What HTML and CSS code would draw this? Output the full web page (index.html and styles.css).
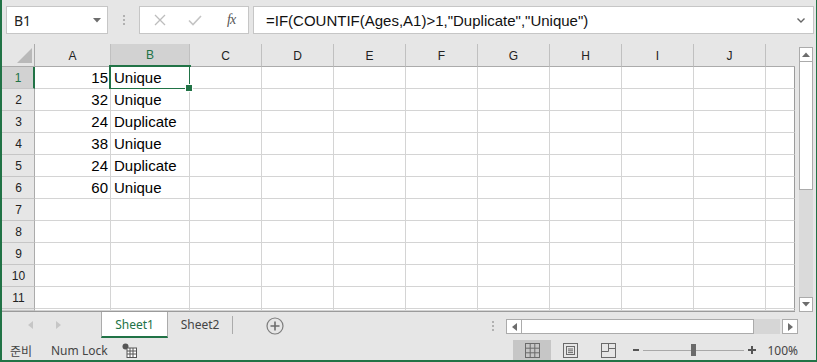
FILE: index.html
```html
<!DOCTYPE html>
<html lang="ko">
<head>
    <meta charset="UTF-8">
    <title>Book1 - Excel</title>
    <link rel="stylesheet" href="styles.css">
</head>
<body>
    <div class="app">
        <!-- Barra de fórmulas -->
        <div class="topbar">
            <div class="namebox">
                <span>B1</span>
                <svg class="caret" width="8" height="5" viewBox="0 0 8 5"><polygon points="0,0 8,0 4,4.5" fill="#6d6d6d"/></svg>
            </div>
            <div class="grip"><i></i><i></i><i></i></div>
            <div class="fx-buttons">
                <svg width="12" height="12" viewBox="0 0 12 12"><path d="M1 1 L11 11 M11 1 L1 11" stroke="#bdbdbd" stroke-width="1.3"/></svg>
                <svg width="14" height="12" viewBox="0 0 14 12"><path d="M1 6.5 L5 10.5 L13 2" stroke="#c4c4c4" stroke-width="1.6" fill="none"/></svg>
                <span class="fx">fx</span>
            </div>
            <div class="formula">
                <span>=IF(COUNTIF(Ages,A1)&gt;1,"Duplicate","Unique")</span>
                <svg class="chev" width="8" height="5" viewBox="0 0 8 5"><path d="M0.5 0.5 L4 4 L7.5 0.5" stroke="#666" stroke-width="1.4" fill="none"/></svg>
            </div>
        </div>

        <!-- Hoja -->
        <div class="sheet">
            <div class="grid">
                <div class="row head">
                    <div class="corner"><svg width="15" height="15" viewBox="0 0 15 15"><polygon points="15,0 15,15 0,15" fill="#b9b9b9"/></svg></div>
                    <div class="ch">A</div>
                    <div class="ch sel">B</div>
                    <div class="ch">C</div>
                    <div class="ch">D</div>
                    <div class="ch">E</div>
                    <div class="ch">F</div>
                    <div class="ch">G</div>
                    <div class="ch">H</div>
                    <div class="ch">I</div>
                    <div class="ch">J</div>
                    <div class="ch last"></div>
                </div>
            </div>
            <div class="vscroll">
                <div class="sb-btn"><svg width="8" height="5" viewBox="0 0 8 5"><polygon points="0,5 8,5 4,0.5" fill="#6d6d6d"/></svg></div>
                <div class="sb-thumb"></div>
                <div class="sb-track"></div>
                <div class="sb-btn"><svg width="8" height="5" viewBox="0 0 8 5"><polygon points="0,0 8,0 4,4.5" fill="#6d6d6d"/></svg></div>
            </div>
        </div>

        <!-- Pestañas -->
        <div class="tabbar">
            <div class="tab-nav">
                <svg width="5" height="8" viewBox="0 0 5 8"><polygon points="5,0 5,8 0,4" fill="#c6c6c6"/></svg>
                <svg width="5" height="8" viewBox="0 0 5 8"><polygon points="0,0 0,8 5,4" fill="#c6c6c6"/></svg>
            </div>
            <div class="tab active">Sheet1</div>
            <div class="tab">Sheet2</div>
            <div class="add-sheet">
                <svg width="18" height="18" viewBox="0 0 18 18"><circle cx="9" cy="9" r="8" fill="none" stroke="#7d7d7d" stroke-width="1.2"/><path d="M9 4.5 V13.5 M4.5 9 H13.5" stroke="#6d6d6d" stroke-width="1.6"/></svg>
            </div>
            <div class="grip h"><i></i><i></i><i></i></div>
            <div class="hscroll">
                <div class="sb-btn"><svg width="5" height="8" viewBox="0 0 5 8"><polygon points="5,0 5,8 0,4" fill="#6d6d6d"/></svg></div>
                <div class="sb-thumb"></div>
                <div class="sb-track"></div>
                <div class="sb-btn"><svg width="5" height="8" viewBox="0 0 5 8"><polygon points="0,0 0,8 5,4" fill="#6d6d6d"/></svg></div>
            </div>
        </div>

        <!-- Barra de estado -->
        <div class="status">
            <span class="ready">준비</span>
            <span class="numlock">Num Lock</span>
            <svg class="macro" width="15" height="15" viewBox="0 0 15 15">
                <circle cx="3.5" cy="3.5" r="3" fill="#555"/>
                <rect x="5" y="5" width="9.5" height="9.5" fill="#fff" stroke="#555"/>
                <path d="M5 8 H14.5 M5 11 H14.5 M8 5 V14.5 M11 5 V14.5" stroke="#555"/>
            </svg>
            <div class="views">
                <div class="view on">
                    <svg width="15" height="15" viewBox="0 0 15 15"><rect x="0.5" y="0.5" width="14" height="14" fill="none" stroke="#6a6a6a"/><path d="M5.2 0.5 V14.5 M9.8 0.5 V14.5 M0.5 5.2 H14.5 M0.5 9.8 H14.5" stroke="#6a6a6a"/></svg>
                </div>
                <div class="view">
                    <svg width="15" height="15" viewBox="0 0 15 15"><rect x="0.5" y="0.5" width="14" height="14" fill="none" stroke="#6a6a6a"/><rect x="3.5" y="3.5" width="8" height="8" fill="none" stroke="#6a6a6a"/><path d="M5 6 H10 M5 7.8 H10 M5 9.6 H10" stroke="#6a6a6a"/></svg>
                </div>
                <div class="view">
                    <svg width="15" height="15" viewBox="0 0 15 15"><rect x="0.5" y="0.5" width="14" height="14" fill="none" stroke="#6a6a6a"/><path d="M0.5 8.5 H7.5 V0.5 M7.5 5.5 H14.5" stroke="#6a6a6a" fill="none"/></svg>
                </div>
            </div>
            <div class="zoom">
                <span class="minus"></span>
                <div class="slider"><span class="knob"></span></div>
                <span class="plus"></span>
            </div>
            <span class="pct">100%</span>
        </div>
    </div>

    <script>
        // Datos de la hoja
        const data = [
            [15, 'Unique'],
            [32, 'Unique'],
            [24, 'Duplicate'],
            [38, 'Unique'],
            [24, 'Duplicate'],
            [60, 'Unique']
        ];

        const grid = document.querySelector('.grid');

        for (let r = 1; r <= 12; r++) {
            const row = document.createElement('div');
            row.className = r === 12 ? 'row partial' : 'row';

            // La fila 12 apenas asoma, sin número visible
            const head = document.createElement('div');
            head.className = r === 1 ? 'rh sel' : 'rh';
            head.textContent = r < 12 ? r : '';
            row.appendChild(head);

            for (let c = 0; c < 11; c++) {
                const cell = document.createElement('div');
                cell.className = 'cell';
                const values = data[r - 1];
                if (values && c === 0) {
                    cell.classList.add('num');
                    cell.textContent = values[0];
                }
                if (values && c === 1) {
                    cell.textContent = values[1];
                }
                if (r === 1 && c === 1) {
                    cell.classList.add('active');
                }
                if (c === 10) {
                    cell.classList.add('last');
                }
                row.appendChild(cell);
            }

            grid.appendChild(row);
        }
    </script>
</body>
</html>
```

FILE: styles.css
```css
* {
    box-sizing: border-box;
}

body {
    margin: 0;
    font-family: 'Noto Sans', 'Liberation Sans', sans-serif;
    background: #e6e6e6;
    color: #444;
}

.app {
    width: 817px;
    height: 362px;
    display: flex;
    flex-direction: column;
    background: #e6e6e6;
    border-left: 2px solid #217346;
    border-right: 1px solid #217346;
    border-bottom: 2px solid #217346;
    overflow: hidden;
}

/* Barra de fórmulas */
.topbar {
    height: 44px;
    flex: none;
    display: flex;
    align-items: flex-start;
    padding: 6px 2px 0 4px;
}

.namebox {
    width: 102px;
    height: 28px;
    background: white;
    border: 1px solid #c6c6c6;
    display: flex;
    align-items: center;
    justify-content: space-between;
    padding: 0 6px 0 7px;
    font-size: 14px;
    color: #222;
}

.grip {
    width: 31px;
    height: 28px;
    display: flex;
    flex-direction: column;
    align-items: center;
    justify-content: center;
    gap: 2px;
}

.grip i {
    width: 2px;
    height: 2px;
    background: #b1b1b1;
}

.fx-buttons {
    width: 110px;
    height: 28px;
    background: white;
    border: 1px solid #c6c6c6;
    display: flex;
    align-items: center;
    padding: 0 10px 0 14px;
    gap: 22px;
}

.fx {
    font-family: 'Liberation Serif', serif;
    font-style: italic;
    font-size: 14px;
    color: #555;
    letter-spacing: -1px;
    margin-left: 3px;
}

.formula {
    flex: 1;
    height: 28px;
    margin-left: 4px;
    background: white;
    border: 1px solid #c6c6c6;
    display: flex;
    align-items: center;
    justify-content: space-between;
    padding: 0 8px 0 12px;
    font-family: 'Liberation Sans', sans-serif;
    font-size: 15px;
    color: #111;
}

/* Hoja */
.sheet {
    height: 268px;
    flex: none;
    display: flex;
}

.grid {
    width: 793px;
    height: 268px;
    overflow: hidden;
    border-bottom: 1px solid #9b9b9b;
    font-family: 'Liberation Sans', sans-serif;
}

.row {
    display: grid;
    grid-template-columns: 33px 76px 79px repeat(8, 72px) 29px;
    height: 22px;
}

.row.head {
    height: 23px;
}

.row.partial {
    height: 2px;
    overflow: hidden;
}

.corner {
    display: flex;
    align-items: flex-end;
    justify-content: flex-end;
    padding: 0 2px 3px 0;
    border-right: 1px solid #ababab;
    border-bottom: 1px solid #ababab;
}

.ch {
    display: flex;
    align-items: center;
    justify-content: center;
    font-size: 12px;
    color: #222;
    padding-top: 1px;
    border-right: 1px solid #c0c0c0;
    border-bottom: 1px solid #ababab;
}

.ch.sel {
    background: #d2d2d2;
    color: #217346;
    border-bottom: 2px solid #217346;
}

.ch.last {
    border-right: none;
}

.rh {
    display: flex;
    align-items: center;
    justify-content: center;
    font-size: 12px;
    color: #222;
    padding-left: 1px;
    border-right: 1px solid #ababab;
    border-bottom: 1px solid #c6c6c6;
}

.rh.sel {
    background: #d2d2d2;
    color: #217346;
    border-right: 2px solid #217346;
}

.cell {
    background: white;
    border-right: 1px solid #d4d4d4;
    border-bottom: 1px solid #d4d4d4;
    font-size: 15px;
    color: #000;
    line-height: 21px;
    padding: 0 3px;
    white-space: nowrap;
    position: relative;
}

.cell.num {
    text-align: right;
    padding-right: 2px;
}

.cell.last {
    border-right: 1px solid #9b9b9b;
}

/* Celda activa */
.cell.active::after {
    content: '';
    position: absolute;
    top: -2px;
    left: -2px;
    right: -2px;
    bottom: -2px;
    border: 2px solid #217346;
}

.cell.active::before {
    content: '';
    position: absolute;
    right: -4px;
    bottom: -4px;
    width: 6px;
    height: 6px;
    background: #217346;
    border: 1px solid white;
    z-index: 1;
}

/* Barras de desplazamiento */
.vscroll {
    width: 21px;
    display: flex;
    flex-direction: column;
    padding: 3px 3px 0 4px;
}

.sb-btn {
    flex: none;
    width: 14px;
    height: 15px;
    background: white;
    border: 1px solid #ababab;
    display: flex;
    align-items: center;
    justify-content: center;
}

.vscroll .sb-thumb {
    height: 128px;
    background: white;
    border: 1px solid #ababab;
    border-top: none;
}

.vscroll .sb-track {
    flex: 1;
    background: #dadada;
}

/* Pestañas */
.tabbar {
    height: 28px;
    flex: none;
    display: flex;
    align-items: flex-start;
    font-size: 12px;
}

.tab-nav {
    width: 99px;
    height: 26px;
    display: flex;
    align-items: center;
    padding-left: 26px;
    gap: 23px;
}

.tab {
    height: 26px;
    width: 65px;
    display: flex;
    align-items: center;
    justify-content: center;
    color: #444;
    padding-bottom: 1px;
}

.tab.active {
    width: 67px;
    background: white;
    color: #217346;
    border-left: 1px solid #ababab;
    border-right: 1px solid #ababab;
    border-bottom: 2px solid #217346;
    padding-bottom: 0;
}

.tab + .tab {
    border-right: 1px solid #ababab;
    height: 18px;
    margin-top: 4px;
}

.add-sheet {
    height: 26px;
    width: 76px;
    display: flex;
    align-items: center;
    padding-left: 33px;
    padding-top: 1px;
}

.grip.h {
    margin-left: auto;
    width: 6px;
    height: 26px;
    padding-top: 1px;
}

.hscroll {
    display: flex;
    margin: 7px 18px 0 10px;
    height: 15px;
}

.hscroll .sb-btn {
    width: 16px;
    height: 15px;
}

.hscroll .sb-thumb {
    width: 232px;
    background: white;
    border: 1px solid #ababab;
    border-left: none;
}

.hscroll .sb-track {
    width: 26px;
    background: #d6d6d6;
    margin-right: 2px;
}

/* Barra de estado */
.status {
    height: 20px;
    flex: none;
    display: flex;
    align-items: center;
    font-size: 12px;
    color: #444;
    padding-left: 8px;
}

.ready {
    font-family: 'Noto Sans CJK KR', sans-serif;
    width: 41px;
}

.numlock {
    width: 71px;
}

.macro {
    margin-top: 1px;
}

.views {
    margin-left: auto;
    display: flex;
    height: 20px;
}

.view {
    width: 38px;
    display: flex;
    align-items: center;
    justify-content: center;
}

.view.on {
    background: #c6c6c6;
}

.zoom {
    display: flex;
    align-items: center;
    margin-left: 6px;
    gap: 4px;
}

.minus {
    width: 6px;
    height: 2px;
    background: #555;
}

.slider {
    width: 101px;
    height: 1px;
    background: #a8a8a8;
    position: relative;
}

.knob {
    position: absolute;
    left: 48px;
    top: -6px;
    width: 5px;
    height: 12px;
    background: #6a6a6a;
}

.plus {
    width: 8px;
    height: 8px;
    background:
        linear-gradient(#555, #555) center / 8px 2px no-repeat,
        linear-gradient(#555, #555) center / 2px 8px no-repeat;
}

.pct {
    margin-left: 11px;
    margin-right: 18px;
}
```
